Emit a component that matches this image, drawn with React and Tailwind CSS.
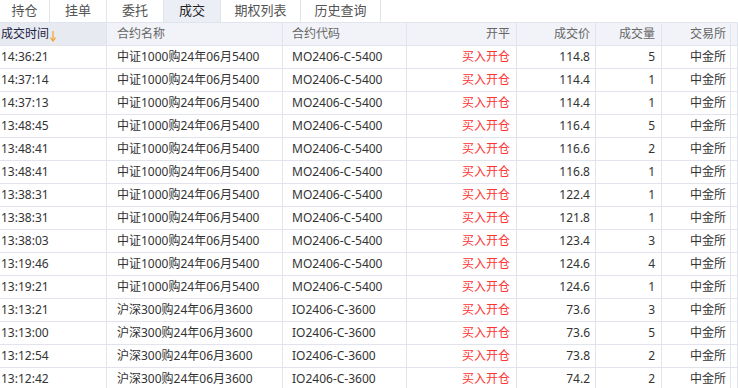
import React from "react";

const tabs = ["持仓", "挂单", "委托", "成交", "期权列表", "历史查询"];
const tabW = ["w-[50px]", "w-[57px]", "w-[57px]", "w-[57px]", "w-[80px]", "w-[80px]"];

const A = ["中证1000购24年06月5400", "MO2406-C-5400"];
const B = ["沪深300购24年06月3600", "IO2406-C-3600"];

const rows = [
  ["14:36:21", A, "114.8", "5"],
  ["14:37:14", A, "114.4", "1"],
  ["14:37:13", A, "114.4", "1"],
  ["13:48:45", A, "116.4", "5"],
  ["13:48:41", A, "116.6", "2"],
  ["13:48:41", A, "116.8", "1"],
  ["13:38:31", A, "122.4", "1"],
  ["13:38:31", A, "121.8", "1"],
  ["13:38:03", A, "123.4", "3"],
  ["13:19:46", A, "124.6", "4"],
  ["13:19:21", A, "124.6", "1"],
  ["13:13:21", B, "73.6", "3"],
  ["13:13:00", B, "73.6", "5"],
  ["13:12:54", B, "73.8", "2"],
  ["13:12:42", B, "74.2", "2"],
];

const grid = "grid grid-cols-[107px_176px_124px_110px_79px_66px_69px_1fr]";
const cell = "border-r border-[#e1e4ec] h-full flex items-center whitespace-nowrap overflow-hidden";

function SortArrow() {
  return (
    <svg width="6" height="12" viewBox="0 0 6 12" className="ml-[1px] mt-[3px]">
      <path d="M3 1 V10" stroke="#f5a020" strokeWidth="1.2" />
      <path d="M0.5 7.5 L3 11 L5.5 7.5" fill="none" stroke="#f5a020" strokeWidth="1.2" />
    </svg>
  );
}

export default function App() {
  return (
    <div className="w-[738px] h-[388px] overflow-hidden bg-white font-['Noto_Sans','Noto_Sans_CJK_SC',sans-serif] text-[12px] text-[#333]">
      <div className="flex h-[23px] border-b border-[#e1e4ec]">
        {tabs.map((t, i) => (
          <div
            key={t}
            className={`${tabW[i]} h-full flex items-center justify-center border-r border-[#e1e4ec] text-[13px] ${
              i === 3 ? "bg-[#eceef5] text-[#222]" : "bg-white text-[#555]"
            }`}
          >
            {t}
          </div>
        ))}
      </div>
      <div className={`${grid} h-[23px] border-b border-[#e1e4ec] text-[#666]`}>
        <div className={`${cell} bg-[#e8eaf2] pl-[1px] text-[#1c2340]`}>
          成交时间
          <SortArrow />
        </div>
        <div className={`${cell} bg-[#f2f3f8] pl-[10px]`}>合约名称</div>
        <div className={`${cell} bg-[#f2f3f8] pl-[9px]`}>合约代码</div>
        <div className={`${cell} bg-[#f2f3f8] justify-end pr-[6px]`}>开平</div>
        <div className={`${cell} bg-[#f2f3f8] justify-end pr-[5px]`}>成交价</div>
        <div className={`${cell} bg-[#f2f3f8] justify-end pr-[6px]`}>成交量</div>
        <div className={`${cell} bg-[#f2f3f8] justify-end pr-[4px]`}>交易所</div>
        <div className={`${cell} bg-[#f2f3f8]`}></div>
      </div>
      {rows.map((r, i) => (
        <div key={i} className={`${grid} h-[23px] border-b border-[#e1e4ec]`}>
          <div className={`${cell} pl-[1px]`}>{r[0]}</div>
          <div className={`${cell} pl-[10px]`}>{r[1][0]}</div>
          <div className={`${cell} pl-[9px]`}>{r[1][1]}</div>
          <div className={`${cell} justify-end pr-[6px] text-[#ff3333]`}>买入开仓</div>
          <div className={`${cell} justify-end pr-[5px]`}>{r[2]}</div>
          <div className={`${cell} justify-end pr-[6px]`}>{r[3]}</div>
          <div className={`${cell} justify-end pr-[4px]`}>中金所</div>
          <div className={`${cell}`}></div>
        </div>
      ))}
    </div>
  );
}
